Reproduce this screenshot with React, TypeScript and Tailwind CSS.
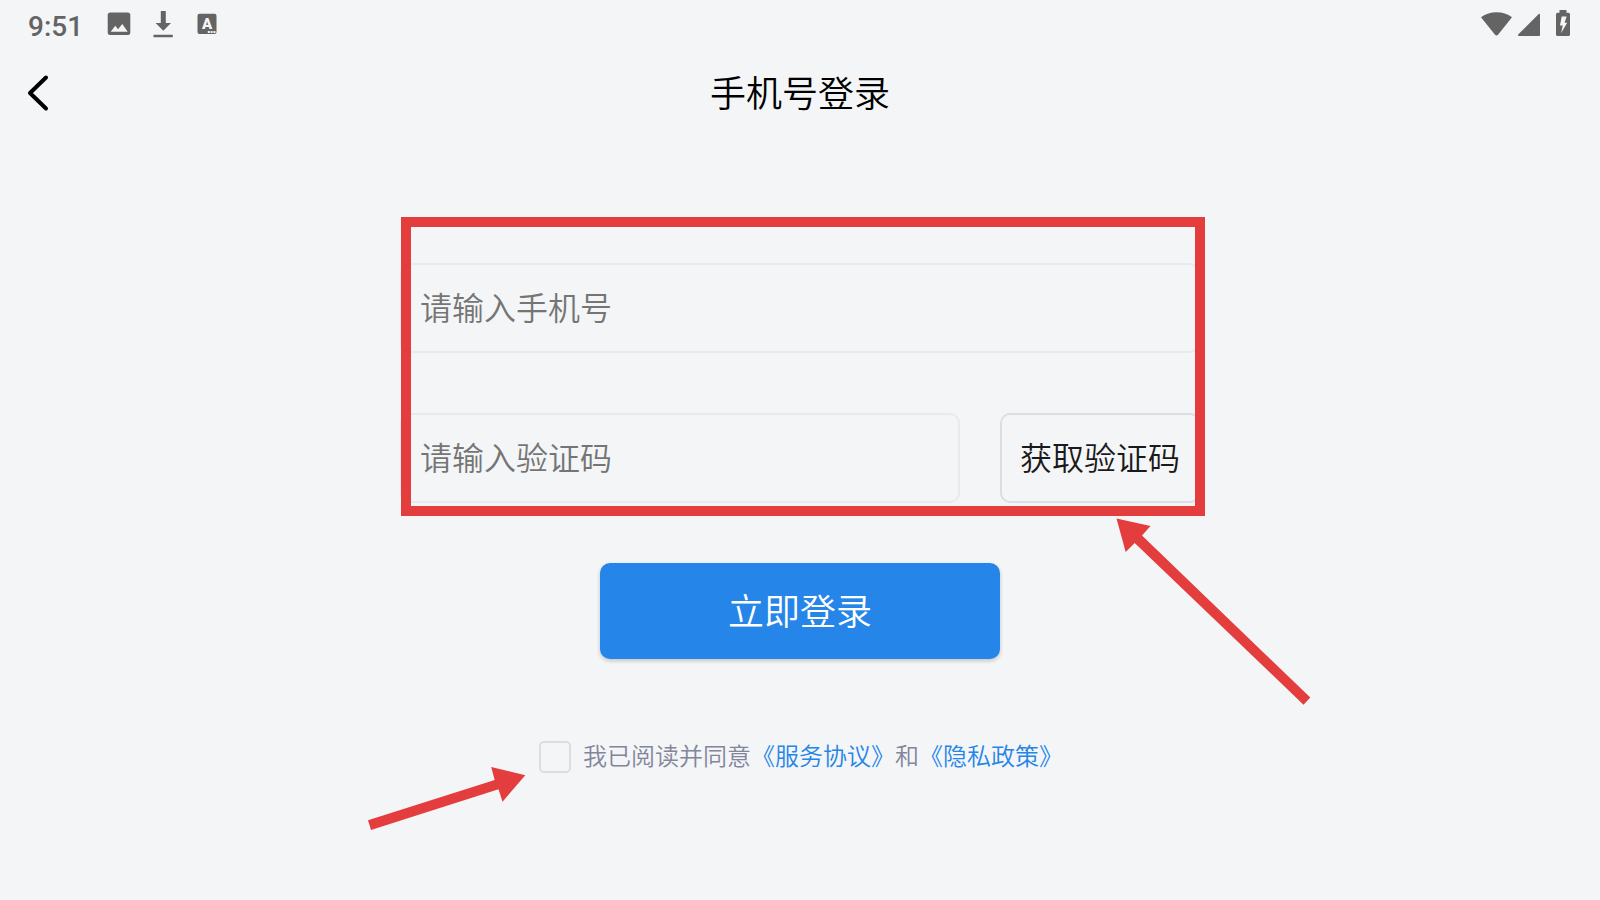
import { useState } from "react";

function StatusBar() {
  return (
    <div className="flex h-12 items-center justify-between px-7 text-[#646464]">
      <div className="flex items-center gap-[22px]">
        <span className="w-[57px] pt-1.5 font-['Roboto',sans-serif] text-[28px] leading-8 font-medium">9:51</span>
        <svg width="24" height="28" viewBox="0 0 24 28" fill="currentColor" aria-hidden="true">
          <path
            fillRule="evenodd"
            d="M3.2 2.5h17.6a2.5 2.5 0 0 1 2.5 2.5v17.5a2.5 2.5 0 0 1-2.5 2.5H3.2a2.5 2.5 0 0 1-2.5-2.5V5a2.5 2.5 0 0 1 2.5-2.5zM3.7 21.7h17l-5.4-7.7-4.3 5.3-2.7-3.6z"
          />
        </svg>
        <svg width="20" height="28" viewBox="0 0 20 28" fill="currentColor" aria-hidden="true">
          <path d="M7.8 1h5v12h5.2l-7.7 7.7L2.6 13h5.2zM.5 24.8h19.3v2.4H.5z" />
        </svg>
        <svg width="22" height="28" viewBox="0 0 22 28" aria-hidden="true">
          <rect x="2.5" y="3.7" width="19" height="20.4" rx="2" fill="currentColor" />
          <text
            x="12"
            y="19"
            textAnchor="middle"
            fill="#f4f5f7"
            className="font-['Roboto',sans-serif] text-[15px] font-black"
          >
            A
          </text>
          <path d="M12.8 21h2v2h-2zM15.6 21h2v2h-2zM18.4 21h2v2h-2z" fill="#f4f5f7" />
        </svg>
      </div>
      <div className="flex items-center gap-1">
        <svg width="32" height="28" viewBox="0 0 32 28" fill="currentColor" aria-hidden="true">
          <path d="M1 7.2C9.8.5 23.4.5 32 7.2L18 24.8q-1.5 1.6-3 0z" />
        </svg>
        <svg width="24" height="28" viewBox="0 0 24 28" fill="currentColor" aria-hidden="true">
          <path d="M23 3.7q1-.3 1 .8v20.5q0 1-1 1H3q-1.5-.4-.8-1.5z" />
        </svg>
        <svg className="ml-3" width="16" height="28" viewBox="0 0 16 28" fill="currentColor" aria-hidden="true">
          <path
            fillRule="evenodd"
            d="M3.5 0h7v2.8h2q1.5 0 1.5 1.5v20.2q0 1.5-1.5 1.5h-11Q0 26 0 24.5V4.3q0-1.5 1.5-1.5h2zM5.7 6.5 4 15.5h2.8L5 23.2l6.2-10.5H8.6L10.6 6.5z"
          />
        </svg>
      </div>
    </div>
  );
}

function Header() {
  return (
    <header className="grid h-[90px] grid-cols-[1fr_auto_1fr] items-center px-6">
      <button type="button" aria-label="返回" className="w-7">
        <svg
          width="28"
          height="40"
          viewBox="0 0 28 40"
          fill="none"
          stroke="#000"
          strokeWidth="4"
          strokeLinecap="round"
          strokeLinejoin="round"
        >
          <path d="M22 4.5 6 20l16 15.5" />
        </svg>
      </button>
      <h1 className="pt-0.5 text-4xl text-black">手机号登录</h1>
    </header>
  );
}

// Red callout box and arrows drawn over the form
function FieldsHighlight() {
  return (
    <div className="pointer-events-none absolute -top-[46px] -right-[5px] -bottom-[13px] left-px border-10 border-[#e43d3d]" />
  );
}

function CodeArrow() {
  return (
    <svg
      className="pointer-events-none absolute top-[250px] left-[710px]"
      width="210"
      height="200"
      viewBox="0 0 210 200"
      fill="#e43d3d"
      aria-hidden="true"
    >
      <path d="M6.5 5.5 40.5 13 32 22.5 200.3 184.5 193.5 191.7 24.7 30 15.7 39z" />
    </svg>
  );
}

function AgreeArrow() {
  return (
    <svg
      className="pointer-events-none absolute top-[497px] -left-10"
      width="180"
      height="90"
      viewBox="0 0 180 90"
      fill="#e43d3d"
      aria-hidden="true"
    >
      <path d="M165.3 15.2 131.2 7 134.7 20 8 60.2 11 70 138.5 29.3 142.5 41.7z" />
    </svg>
  );
}

const FIELD =
  "h-[90px] min-w-0 rounded-[10px] border-2 border-[#e9eaed] bg-transparent px-[18px] text-[32px] text-[#1a1a1a] outline-none placeholder:text-[#757575]";

export default function App() {
  const [phone, setPhone] = useState("");
  const [code, setCode] = useState("");
  const [agreed, setAgreed] = useState(false);

  return (
    <div className="min-h-screen bg-[#f4f5f7] font-['Inter','Noto_Sans_CJK_SC',sans-serif] font-[350]">
      <StatusBar />
      <Header />
      <main className="mx-auto max-w-[800px] pt-[125px]">
        <form className="relative flex flex-col items-center" onSubmit={(e) => e.preventDefault()}>
          <div className="relative flex w-full flex-col gap-[60px]">
            <input
              type="tel"
              aria-label="手机号"
              placeholder="请输入手机号"
              className={FIELD}
              value={phone}
              onChange={(e) => setPhone(e.target.value)}
            />
            <div className="flex gap-10">
              <input
                type="text"
                inputMode="numeric"
                aria-label="验证码"
                placeholder="请输入验证码"
                className={`${FIELD} flex-1`}
                value={code}
                onChange={(e) => setCode(e.target.value)}
              />
              <button
                type="button"
                className="w-[200px] rounded-[10px] border-2 border-[#dcdee5] pt-0.5 text-[32px] text-[#1a1a1a]"
              >
                获取验证码
              </button>
            </div>
            <FieldsHighlight />
          </div>

          <button
            type="submit"
            className="mt-[60px] h-24 w-[400px] rounded-[10px] bg-[#2585e8] pt-0.5 text-4xl text-white shadow-[0_2px_4px_rgba(0,0,0,0.2)]"
          >
            立即登录
          </button>

          <div className="mt-20 flex items-center gap-3 pl-0.5 text-2xl leading-9 text-[#82869a]">
            <input
              id="agree"
              type="checkbox"
              checked={agreed}
              onChange={(e) => setAgreed(e.target.checked)}
              className="size-8 appearance-none rounded-[5px] border-2 border-[#dcdde0] checked:bg-[#2585e8]"
            />
            <p>
              <label htmlFor="agree">我已阅读并同意</label>
              <a href="#terms" className="text-[#2585e8]">
                《服务协议》
              </a>
              和
              <a href="#privacy" className="text-[#2585e8]">
                《隐私政策》
              </a>
            </p>
          </div>
          <CodeArrow />
          <AgreeArrow />
        </form>
      </main>
    </div>
  );
}
